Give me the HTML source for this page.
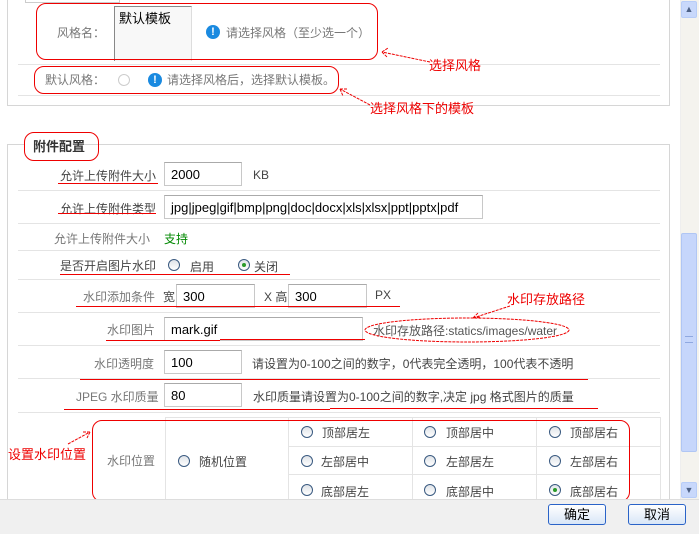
<!DOCTYPE html>
<html style="overflow:hidden"><head><meta charset="utf-8"><style>
*{margin:0;padding:0;box-sizing:border-box}
html,body{width:699px;height:534px;overflow:hidden}
body{background:#fff;position:relative;font-family:"Liberation Sans","Noto Sans CJK SC",sans-serif;font-size:12px;color:#444}
.a{position:absolute;white-space:nowrap}
.g{color:#777}
.ln{position:absolute;height:1px;background:#e4e4e4}
.ul{position:absolute;height:1px;background:#e00}
.in{position:absolute;border:1px solid #c8c8c8;border-top-color:#aaa;background:#fff;font-size:13px;color:#000;padding:3px 6px;height:24px;line-height:17px;overflow:hidden;white-space:nowrap}
.rb{position:absolute;border:1px solid #e00;border-radius:10px}
.r{color:#e00;font-size:13px}
.rad{position:absolute;width:12px;height:12px;border:1px solid #3a5a80;border-radius:50%;background:linear-gradient(#dfe3e8,#fff)}
.rad.c::after{content:"";position:absolute;left:3px;top:3px;width:4px;height:4px;border-radius:50%;background:#2a9a2a}
.ic{position:absolute;width:14px;height:14px;border-radius:50%;background:#1a8ae0;color:#fff;font-weight:bold;font-size:11px;text-align:center;line-height:14px}
.btn{position:absolute;width:58px;height:21px;border:1px solid #2a63c8;border-radius:3px;background:linear-gradient(#fff,#d8e6f7);text-align:center;line-height:19px;font-size:13px;color:#000}
</style></head><body>
<div class="a" style="left:7px;top:-2px;width:663px;height:108px;border:1px solid #d6d6d6"></div>
<div class="a" style="left:25px;top:-2px;width:95px;height:5px;border:1px solid #ccc"></div>
<div class="ln" style="left:18px;top:64px;width:642px"></div>
<div class="ln" style="left:18px;top:95px;width:642px"></div>
<div class="a g" style="left:57px;top:24px">风格名：</div>
<div class="a" style="left:114px;top:6px;width:78px;height:55px;border:1px solid #888;border-bottom:none;border-right-color:#ddd;background:#f8f8f8;font-size:13px;color:#000;padding:1px 4px">默认模板</div>
<div class="ic" style="left:206px;top:25px">!</div>
<div class="a g" style="left:226px;top:24px">请选择风格（至少选一个）</div>
<div class="rb" style="left:36px;top:3px;width:342px;height:57px"></div>
<div class="a r" style="left:429px;top:55px">选择风格</div>
<div class="a g" style="left:45px;top:71px">默认风格：</div>
<div class="a" style="left:118px;top:74px;width:12px;height:12px;border:1px solid #ccc;border-radius:50%"></div>
<div class="ic" style="left:148px;top:73px">!</div>
<div class="a g" style="left:167px;top:71px">请选择风格后，选择默认模板。</div>
<div class="rb" style="left:34px;top:66px;width:305px;height:28px"></div>
<div class="a r" style="left:370px;top:98px">选择风格下的模板</div>

<div class="a" style="left:7px;top:144px;width:663px;height:380px;border:1px solid #d6d6d6"></div>
<div class="a" style="left:25px;top:133px;width:48px;height:25px;background:#fff"></div>
<div class="a" style="left:33px;top:136px;font-weight:bold;font-size:13px;color:#333">附件配置</div>
<div class="rb" style="left:24px;top:132px;width:75px;height:29px"></div>

<div class="a" style="left:60px;top:167px">允许上传附件大小</div>
<div class="in" style="left:164px;top:162px;width:78px">2000</div>
<div class="a" style="left:253px;top:168px">KB</div>
<div class="ul" style="left:58px;top:183px;width:100px"></div>
<div class="ln" style="left:18px;top:190px;width:642px"></div>

<div class="a" style="left:60px;top:200px">允许上传附件类型</div>
<div class="in" style="left:164px;top:195px;width:319px">jpg|jpeg|gif|bmp|png|doc|docx|xls|xlsx|ppt|pptx|pdf</div>
<div class="ul" style="left:58px;top:213px;width:98px"></div>
<div class="ln" style="left:18px;top:223px;width:642px"></div>

<div class="a g" style="left:54px;top:230px">允许上传附件大小</div>
<div class="a" style="left:164px;top:230px;color:#080">支持</div>
<div class="ln" style="left:18px;top:250px;width:642px"></div>

<div class="a" style="left:60px;top:257px">是否开启图片水印</div>
<div class="rad" style="left:168px;top:259px"></div><div class="a" style="left:190px;top:258px">启用</div>
<div class="rad c" style="left:238px;top:259px"></div><div class="a" style="left:254px;top:258px">关闭</div>
<div class="ul" style="left:60px;top:274px;width:230px"></div>
<div class="ln" style="left:18px;top:279px;width:642px"></div>

<div class="a g" style="left:83px;top:288px">水印添加条件</div>
<div class="a" style="left:163px;top:288px">宽</div>
<div class="in" style="left:176px;top:284px;width:79px">300</div>
<div class="a" style="left:264px;top:288px">X 高</div>
<div class="in" style="left:288px;top:284px;width:79px">300</div>
<div class="a" style="left:375px;top:288px">PX</div>
<div class="ul" style="left:76px;top:306px;width:324px"></div>
<div class="ln" style="left:18px;top:312px;width:642px"></div>

<div class="a g" style="left:107px;top:321px">水印图片</div>
<div class="in" style="left:164px;top:317px;width:199px">mark.gif</div>
<div class="ul" style="left:106px;top:340px;width:114px"></div>
<div class="ul" style="left:220px;top:339px;width:145px"></div>
<div class="a" style="left:373px;top:322px;color:#555">水印存放路径:statics/images/water</div>
<svg class="a" style="left:0;top:0" width="699" height="534">
<ellipse cx="467" cy="330" rx="102" ry="12" fill="none" stroke="#e00" stroke-dasharray="3,1"/>
<path d="M510 306 L473 318 M473 318 l8 -1 M473 318 l5 -5" stroke="#e00" fill="none" stroke-dasharray="3,1"/>
<path d="M430 62 L382 52 M382 52 l6 -4 M382 52 l5 5" stroke="#e00" fill="none" stroke-dasharray="3,1"/>
<path d="M370 105 L340 89 M340 89 l3 7 M340 89 l7 0" stroke="#e00" fill="none" stroke-dasharray="3,1"/>
<path d="M68 444 L90 432 M90 432 l-7 0 M90 432 l-3 6" stroke="#e00" fill="none" stroke-dasharray="3,1"/>
</svg>
<div class="a r" style="left:507px;top:289px">水印存放路径</div>
<div class="ln" style="left:18px;top:345px;width:642px"></div>

<div class="a g" style="left:94px;top:355px">水印透明度</div>
<div class="in" style="left:164px;top:350px;width:78px">100</div>
<div class="a" style="left:252px;top:355px">请设置为0-100之间的数字，0代表完全透明，100代表不透明</div>
<div class="ul" style="left:80px;top:379px;width:508px"></div>
<div class="ln" style="left:18px;top:378px;width:642px"></div>

<div class="a g" style="left:76px;top:388px">JPEG 水印质量</div>
<div class="in" style="left:164px;top:383px;width:78px">80</div>
<div class="a" style="left:253px;top:388px">水印质量请设置为0-100之间的数字,决定 jpg 格式图片的质量</div>
<div class="ul" style="left:64px;top:409px;width:266px"></div>
<div class="ul" style="left:330px;top:408px;width:268px"></div>
<div class="ln" style="left:18px;top:412px;width:642px"></div>

<div class="ln" style="left:165px;top:417px;width:495px"></div>
<div class="ln" style="left:288px;top:446px;width:372px"></div>
<div class="ln" style="left:288px;top:474px;width:372px"></div>
<div class="a" style="left:165px;top:417px;width:1px;height:90px;background:#e4e4e4"></div>
<div class="a" style="left:288px;top:417px;width:1px;height:90px;background:#e4e4e4"></div>
<div class="a" style="left:412px;top:417px;width:1px;height:90px;background:#e4e4e4"></div>
<div class="a" style="left:536px;top:417px;width:1px;height:90px;background:#e4e4e4"></div>
<div class="a" style="left:660px;top:417px;width:1px;height:90px;background:#e4e4e4"></div>
<div class="a g" style="left:107px;top:452px">水印位置</div>
<div class="rad" style="left:178px;top:455px"></div><div class="a" style="left:199px;top:453px">随机位置</div>
<div class="rad" style="left:301px;top:426px"></div><div class="a" style="left:322px;top:424px">顶部居左</div>
<div class="rad" style="left:424px;top:426px"></div><div class="a" style="left:446px;top:424px">顶部居中</div>
<div class="rad" style="left:549px;top:426px"></div><div class="a" style="left:570px;top:424px">顶部居右</div>
<div class="rad" style="left:301px;top:455px"></div><div class="a" style="left:321px;top:453px">左部居中</div>
<div class="rad" style="left:424px;top:455px"></div><div class="a" style="left:446px;top:453px">左部居左</div>
<div class="rad" style="left:549px;top:455px"></div><div class="a" style="left:570px;top:453px">左部居右</div>
<div class="rad" style="left:301px;top:484px"></div><div class="a" style="left:321px;top:483px">底部居左</div>
<div class="rad" style="left:424px;top:484px"></div><div class="a" style="left:446px;top:483px">底部居中</div>
<div class="rad c" style="left:549px;top:484px"></div><div class="a" style="left:570px;top:483px">底部居右</div>
<div class="rb" style="left:92px;top:420px;width:538px;height:82px"></div>
<div class="a r" style="left:8px;top:444px">设置水印位置</div>

<div class="a" style="left:680px;top:0;width:19px;height:499px;background:#f4f3ee;border-left:1px solid #eee"></div>
<div class="a" style="left:681px;top:1px;width:16px;height:17px;border:1px solid #b8cdf8;border-radius:2px;background:#c8d8fb;color:#4d6185;font-size:9px;text-align:center;line-height:15px">▲</div>
<div class="a" style="left:681px;top:233px;width:16px;height:219px;border:1px solid #b0c6f4;border-radius:2px;background:#c6d6fb"></div>
<div class="a" style="left:685px;top:336px;width:8px;height:7px;border-top:1px solid #8fa8e0;border-bottom:1px solid #8fa8e0"></div>
<div class="a" style="left:681px;top:482px;width:16px;height:16px;border:1px solid #b8cdf8;border-radius:2px;background:#c8d8fb;color:#4d6185;font-size:9px;text-align:center;line-height:15px">▼</div>
<div class="a" style="left:0;top:499px;width:699px;height:35px;background:#f0f0f0;border-top:1px solid #ddd"></div>
<div class="btn" style="left:548px;top:504px">确定</div>
<div class="btn" style="left:628px;top:504px">取消</div>
</body></html>
